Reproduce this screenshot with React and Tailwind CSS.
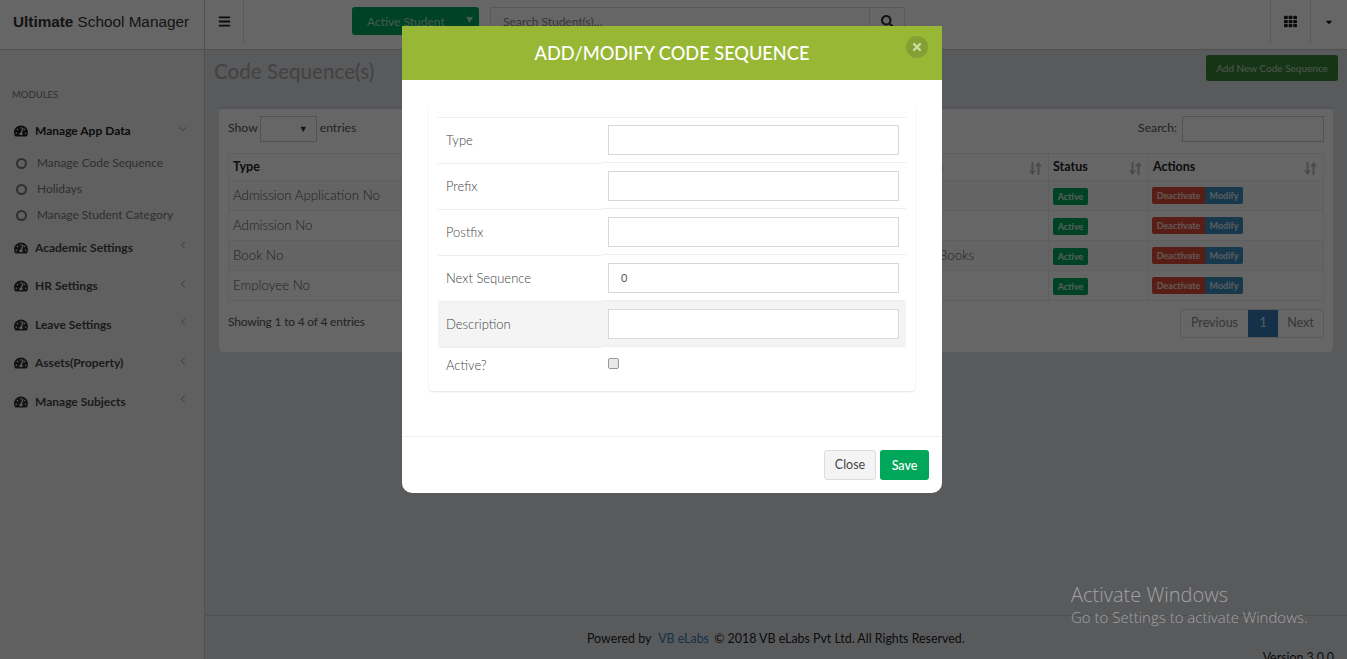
import { FaTachometerAlt, FaBars, FaSearch, FaTh, FaTimes, FaCaretDown } from 'react-icons/fa'
import { ChevronDown, ChevronLeft } from 'lucide-react'

const FONT = { fontFamily: 'Lato, sans-serif' }

const menu = ['Academic Settings', 'HR Settings', 'Leave Settings', 'Assets(Property)', 'Manage Subjects']

const rows = [
  { type: 'Admission Application No', desc: '' },
  { type: 'Admission No', desc: '' },
  { type: 'Book No', desc: 'Of Library Books' },
  { type: 'Employee No', desc: '' },
]

function SortIcon() {
  return (
    <svg width="13" height="13" viewBox="0 0 13 13" className="absolute right-[6px] top-[8px] text-[#bbb]" fill="currentColor">
      <path d="M2.5 0h2v8.5H7L3.5 13 0 8.5h2.5z" />
      <path d="M8.5 13h2V4.5H13L9.5 0 6 4.5h2.5z" />
    </svg>
  )
}

function Sidebar() {
  return (
    <aside className="w-[205px] shrink-0 border-r border-[#c9c9c9] bg-[#f0f0f0]">
      <p className="pl-3 pt-[39px] text-[9.5px] leading-[12px] text-[#777]">MODULES</p>
      <div className="mt-[15px] flex h-[30px] items-center pl-[14px] pr-[15px] text-[12px] font-bold text-[#222]">
        <FaTachometerAlt className="mr-[7px] text-[14px]" />
        <span>Manage App Data</span>
        <ChevronDown size={12} strokeWidth={1.6} className="ml-auto mb-[5px] text-[#777]" />
      </div>
      <ul className="mt-[4px] text-[11.9px] text-[#777]">
        {['Manage Code Sequence', 'Holidays', 'Manage Student Category'].map(s => (
          <li key={s} className="flex h-[26px] items-center pl-4">
            <span className="mr-[10px] h-[11px] w-[11px] rounded-full border-2 border-[#777]" />
            {s}
          </li>
        ))}
      </ul>
      <div className="mt-[0.4px]">
        {menu.map(m => (
          <div key={m} className="flex h-[38.5px] items-center pl-[14px] pr-[15px] text-[12px] font-bold text-[#444]">
            <FaTachometerAlt className="mr-[7px] text-[14px] text-[#333]" />
            <span>{m}</span>
            <ChevronLeft size={12} strokeWidth={1.6} className="ml-auto mb-[5px] text-[#777]" />
          </div>
        ))}
      </div>
    </aside>
  )
}

function DataPanel() {
  return (
    <div className="mx-[14px] mt-[25px] h-[246px] rounded-sm border-t-[3px] border-[#d2d6de] bg-white px-[9px] pt-[7px]">
      <div className="flex h-[26px] items-center justify-between text-[12.2px] text-[#555]">
        <div className="flex items-center gap-[1px]">
          <span className="mb-[1px]">Show</span>
          <div className="ml-[1px] flex h-[26px] w-[57px] items-center justify-end border border-[#ccc] pr-2 text-[9px] text-[#333]">▼</div>
          <span className="mb-[1px] ml-[2px]">entries</span>
        </div>
        <div className="flex items-center gap-[5px]">
          <span className="mb-[1px]">Search:</span>
          <div className="h-[26px] w-[142px] border border-[#ccc]" />
        </div>
      </div>
      <table className="mt-[11px] w-full table-fixed border-collapse text-[13.3px] font-light text-[#555]">
        <colgroup>
          <col className="w-[250px]" />
          <col className="w-[200px]" />
          <col className="w-[100px]" />
          <col className="w-[95px]" />
          <col className="w-[175px]" />
          <col className="w-[100px]" />
          <col />
        </colgroup>
        <thead>
          <tr className="h-[27px] text-left text-[12.5px] font-bold text-[#222]">
            {['Type', 'Prefix', 'Postfix', 'Next Sequence', 'Description', 'Status', 'Actions'].map(h => (
              <th key={h} className="relative border border-[#eee] pl-[4px] font-bold">
                {h}
                <SortIcon />
              </th>
            ))}
          </tr>
        </thead>
        <tbody>
          {rows.map((r, i) => (
            <tr key={r.type} className={`h-[30px] ${i % 2 === 0 ? 'bg-[#f9f9f9]' : 'bg-white'}`}>
              <td className="border border-[#eee] pl-[4px]">{r.type}</td>
              <td className="border border-[#eee]" />
              <td className="border border-[#eee]" />
              <td className="border border-[#eee]" />
              <td className="border border-[#eee] pl-[4px]">{r.desc}</td>
              <td className="border border-[#eee] pl-[4px]">
                <span className="inline-flex h-[17px] w-[35px] items-center justify-center rounded-[2px] bg-[#00a65a] text-[9px] font-bold text-white/80">Active</span>
              </td>
              <td className="border border-[#eee] pl-[3px]">
                <div className="flex">
                  <span className="flex h-[17px] w-[53px] items-center justify-center rounded-l-[2px] bg-[#dd4b39] text-[9px] font-bold text-white/80">Deactivate</span>
                  <span className="flex h-[17px] w-[38px] items-center justify-center rounded-r-[2px] bg-[#3c8dbc] text-[9px] font-bold text-white/80">Modify</span>
                </div>
              </td>
            </tr>
          ))}
        </tbody>
      </table>
      <div className="mt-[8px] flex items-center justify-between">
        <span className="mb-[3px] text-[12px] tracking-[-0.2px] text-[#555]">Showing 1 to 4 of 4 entries</span>
        <div className="flex h-[29px] overflow-hidden rounded-[3px] border border-[#ddd] text-[12.5px] text-[#888]">
          <span className="flex w-[67px] items-center justify-center">Previous</span>
          <span className="flex w-[30px] items-center justify-center bg-[#337ab7] text-white/80">1</span>
          <span className="flex w-[45px] items-center justify-center">Next</span>
        </div>
      </div>
    </div>
  )
}

function FormRow({ label, value, shaded, first }) {
  const shade = shaded ? 'bg-[#f4f4f4]' : ''
  return (
    <div className="flex h-[46px]">
      <label className={`flex w-[164px] items-center border-t border-[#eee] pl-2 text-[13px] font-light text-[#444] ${shade}`}>{label}</label>
      <div className={`flex-1 border-t border-[#eee] pr-[7px] pl-[6px] ${first ? 'pt-[7px]' : '-mt-px pt-[8px]'} ${shade}`}>
        <div className="flex h-[30px] w-full items-center border border-[#d8d8d8] bg-white pl-3 text-[11px] text-[#555]">{value}</div>
      </div>
    </div>
  )
}

function Modal() {
  return (
    <div className="absolute left-[402px] top-[26px] flex h-[467px] w-[540px] flex-col overflow-hidden rounded-b-[10px] bg-white">
      <div className="relative flex h-[54px] items-center justify-center bg-[#98b734] pt-[2px] text-[18.2px] font-medium text-white">
        ADD/MODIFY CODE SEQUENCE
        <span className="absolute right-[14px] top-[10px] flex h-[22px] w-[22px] items-center justify-center rounded-full bg-[#84a034] text-[12px] text-[#cfdca0]">
          <FaTimes />
        </span>
      </div>
      <div className="mx-[27px] mt-[27px] h-[284px] rounded-[3px] px-[9px] pt-[10px] shadow-[0_1px_2px_rgba(0,0,0,0.12)]">
        <FormRow label="Type" first />
        <FormRow label="Prefix" />
        <FormRow label="Postfix" />
        <FormRow label="Next Sequence" value="0" />
        <FormRow label="Description" shaded />
        <div className="flex">
          <span className="w-[164px] border-t border-[#eee] pl-2 pt-[8px] text-[13px] font-light text-[#444]">Active?</span>
          <div className="-mt-px flex-1 border-t border-[#eee] pl-[6px] pt-[11px]">
            <span className="block h-[11px] w-[11px] rounded-[2px] border border-[#999] bg-[#e8e8e8]" />
          </div>
        </div>
      </div>
      <div className="mt-auto flex h-[57px] items-start justify-end gap-1 border-t border-[#f2f2f2] pr-[13px] pt-[13px]">
        <button className="h-[30px] w-[52px] rounded-[3px] border border-[#ddd] bg-[#f4f4f4] pt-[1px] text-[12.5px] text-[#444]">Close</button>
        <button className="h-[30px] w-[49px] rounded-[3px] bg-[#00a65a] pt-[2px] text-[12.5px] font-medium text-white">Save</button>
      </div>
    </div>
  )
}

export default function App() {
  return (
    <div className="relative flex h-[659px] flex-col overflow-hidden bg-[#dfe1e5]" style={FONT}>
      <header className="flex h-[50px] shrink-0 border-b border-[#c9c9c9] bg-white">
        <div className="flex w-[205px] items-center border-r border-[#c9c9c9] pb-[4px] pl-[13px] text-[15.3px] text-[#333]" style={{ fontFamily: '"Liberation Sans", sans-serif' }}>
          <b>Ultimate</b>&nbsp;School Manager
        </div>
        <div className="flex h-[43px] w-[39px] items-center justify-center border-r border-[#ddd] text-[13px] text-[#222]">
          <FaBars />
        </div>
        <div className="ml-[108px] mt-[7px] flex h-[28px] w-[127px] items-center rounded-[3px] bg-[#00a65a] pl-[15px] pr-[6px] pt-[2px] text-[12px] text-white/70">
          Active Student
          <svg width="7" height="6" viewBox="0 0 7 6" fill="currentColor" className="ml-auto mb-[4px]">
            <path d="M0 0h7L3.5 6z" />
          </svg>
        </div>
        <div className="ml-[11px] mt-[7px] flex h-[28px] w-[380px] items-center border border-[#ddd] pl-[12px] pt-[2px] text-[12px] text-[#888]">Search Student(s)...</div>
        <div className="mt-[7px] flex h-[28px] w-[35px] items-center justify-center border border-l-0 border-[#ddd] text-[13px] text-[#333]">
          <FaSearch />
        </div>
        <div className="ml-auto flex h-[43px] w-[40px] items-center justify-center border-l border-[#ddd] text-[13px] text-[#222]">
          <FaTh />
        </div>
        <div className="flex h-[43px] w-[37px] items-center justify-center border-l border-[#ddd] text-[10px] text-[#222]">
          <FaCaretDown />
        </div>
      </header>
      <div className="flex min-h-0 flex-1">
        <Sidebar />
        <main className="flex min-w-0 flex-1 flex-col">
          <div className="flex h-[31px] items-start justify-between pl-[9px] pr-[9px] pt-[5px]">
            <h1 className="pt-[3px] text-[20.6px] font-medium leading-[26px] text-[#a9a9a9]">Code Sequence(s)</h1>
            <div className="flex h-[26px] w-[132px] items-center justify-center rounded-[3px] bg-[#398439] pt-[1px] text-[10px] text-white/70">Add New Code Sequence</div>
          </div>
          <DataPanel />
          <footer className="mt-auto h-[44px] border-t border-[#c9c9c9] pl-[382px] pt-[14px] text-[12.4px] leading-[18px] text-[#222]">
            <p>
              Powered by <span className="ml-1 text-[#337ab7]">VB eLabs</span> <span className="ml-[2px]">© 2018 VB eLabs Pvt Ltd. All Rights Reserved.</span>
            </p>
            <p className="mt-[1px] pr-[13px] text-right">Version 3.0.0</p>
          </footer>
        </main>
      </div>
      <div className="absolute inset-0 bg-black/60" />
      <Modal />
      <div className="pointer-events-none absolute left-[1071px] top-[583px] font-light text-white/45" style={{ fontFamily: '"Open Sans", sans-serif' }}>
        <p className="text-[20px] leading-[24px]">Activate Windows</p>
        <p className="text-[15px] leading-[20px]">Go to Settings to activate Windows.</p>
      </div>
    </div>
  )
}
